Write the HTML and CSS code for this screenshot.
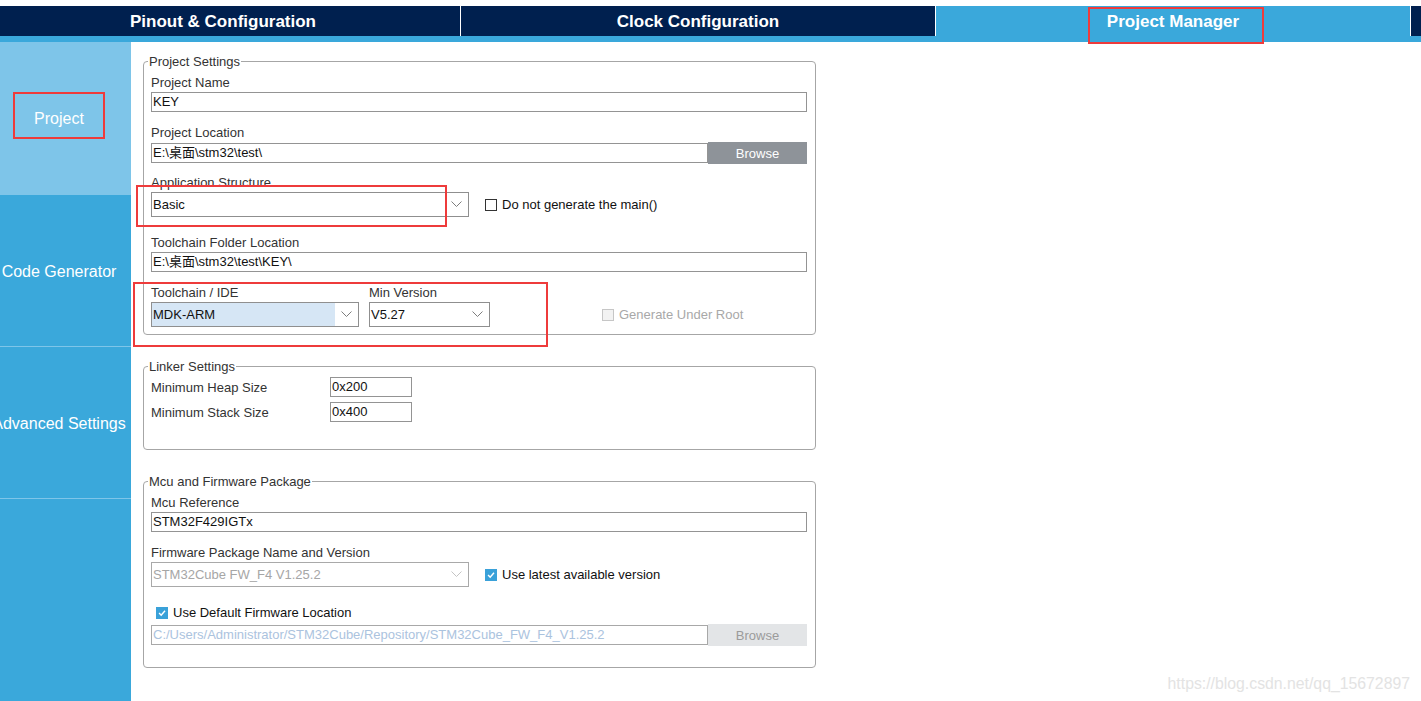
FILE: index.html
```html
<!DOCTYPE html>
<html>
  <head>
    <title>STM32CubeMX - Project Manager</title>
    <meta charset="utf-8"/>
    <meta name="viewport" content="width=device-width, initial-scale=1.0"/>
    <link rel="stylesheet" href="styles.css">
  </head>
  <body>
    <div class="tabs">
      <div class="tab">Pinout &amp; Configuration</div>
      <div class="tab">Clock Configuration</div>
      <div class="tab active">Project Manager</div>
      <div class="tab filler"></div>
    </div>
    <div class="main">
      <div class="side">
        <div class="side-item active">Project</div>
        <div class="side-item">Code Generator</div>
        <div class="side-item">Advanced Settings</div>
      </div>
      <div class="content">
        <fieldset class="group project-group">
          <legend>Project Settings</legend>
          <div class="field">
            <div class="label">Project Name</div>
            <div class="input">KEY</div>
          </div>
          <div class="field">
            <div class="label">Project Location</div>
            <div class="browse-row">
              <div class="input path">E:\桌面\stm32\test\</div>
              <div class="browse">Browse</div>
            </div>
          </div>
          <div class="field tall">
            <div class="label">Application Structure</div>
            <div class="inline">
              <div class="select wide">
                <span class="value">Basic</span>
                <span class="arrow"><svg width="11" height="7" viewBox="0 0 11 7"><polyline points="0.5,0.5 5.5,5.5 10.5,0.5" fill="none" stroke="#7d7d7d" stroke-width="1"/></svg></span>
              </div>
              <span class="check"></span>
              <span class="check-label">Do not generate the main()</span>
            </div>
          </div>
          <div class="field">
            <div class="label">Toolchain Folder Location</div>
            <div class="input">E:\桌面\stm32\test\KEY\</div>
          </div>
          <div class="toolchain-row">
            <div class="col ide">
              <div class="label">Toolchain / IDE</div>
              <div class="select">
                <span class="value picked">MDK-ARM</span>
                <span class="arrow"><svg width="11" height="7" viewBox="0 0 11 7"><polyline points="0.5,0.5 5.5,5.5 10.5,0.5" fill="none" stroke="#7d7d7d" stroke-width="1"/></svg></span>
              </div>
            </div>
            <div class="col version">
              <div class="label">Min Version</div>
              <div class="select">
                <span class="value">V5.27</span>
                <span class="arrow"><svg width="11" height="7" viewBox="0 0 11 7"><polyline points="0.5,0.5 5.5,5.5 10.5,0.5" fill="none" stroke="#7d7d7d" stroke-width="1"/></svg></span>
              </div>
            </div>
            <div class="root-check">
              <span class="check disabled"></span>
              <span class="check-label disabled">Generate Under Root</span>
            </div>
          </div>
        </fieldset>

        <fieldset class="group linker-group">
          <legend>Linker Settings</legend>
          <div class="linker-row">
            <span class="linker-label">Minimum Heap Size</span>
            <div class="input small">0x200</div>
          </div>
          <div class="linker-row">
            <span class="linker-label">Minimum Stack Size</span>
            <div class="input small">0x400</div>
          </div>
        </fieldset>

        <fieldset class="group mcu-group">
          <legend>Mcu and Firmware Package</legend>
          <div class="field">
            <div class="label">Mcu Reference</div>
            <div class="input">STM32F429IGTx</div>
          </div>
          <div class="field tall">
            <div class="label">Firmware Package Name and Version</div>
            <div class="inline">
              <div class="select wide disabled">
                <span class="value">STM32Cube FW_F4 V1.25.2</span>
                <span class="arrow"><svg width="11" height="7" viewBox="0 0 11 7"><polyline points="0.5,0.5 5.5,5.5 10.5,0.5" fill="none" stroke="#c4c4c4" stroke-width="1"/></svg></span>
              </div>
              <span class="check checked"><svg width="12" height="12" viewBox="0 0 12 12"><polyline points="2.5,6 5,8.6 9.6,3.2" fill="none" stroke="#fff" stroke-width="1.7"/></svg></span>
              <span class="check-label">Use latest available version</span>
            </div>
          </div>
          <div class="default-row">
            <span class="check checked"><svg width="12" height="12" viewBox="0 0 12 12"><polyline points="2.5,6 5,8.6 9.6,3.2" fill="none" stroke="#fff" stroke-width="1.7"/></svg></span>
            <span class="check-label">Use Default Firmware Location</span>
          </div>
          <div class="browse-row">
            <div class="input path disabled">C:/Users/Administrator/STM32Cube/Repository/STM32Cube_FW_F4_V1.25.2</div>
            <div class="browse disabled">Browse</div>
          </div>
        </fieldset>
      </div>
    </div>

    <div class="mark mark-project"></div>
    <div class="mark mark-tab"></div>
    <div class="mark mark-structure"></div>
    <div class="mark mark-toolchain"></div>

    <div class="watermark">https://blog.csdn.net/qq_15672897</div>
  </body>
</html>
```

FILE: styles.css
```css
body {
  background: #fff;
  font-family: "Liberation Sans", Arial, "Noto Sans CJK SC", sans-serif;
  height: 701px;
  margin: 0;
  overflow: hidden;
  position: relative;
}
div, span, fieldset {
  box-sizing: border-box;
}

/* top tabs */
.tabs {
  background: #00204f;
  border-bottom: 6px solid #3aa8db;
  display: flex;
  height: 36px;
  margin-top: 6px;
}
.tab {
  align-items: center;
  color: #fff;
  display: flex;
  font-size: 17px;
  font-weight: bold;
  justify-content: center;
  padding-top: 2px;
  width: 475px;
}
.tab:first-child {
  padding-right: 14px;
  width: 460px;
}
.tab + .tab {
  border-left: 1px solid #fff;
}
.tab.active {
  background: #3aa8db;
}
.tab.filler {
  flex: 1;
}

.main {
  display: flex;
  height: 659px;
}

/* left menu */
.side {
  background: #3aa8db;
  flex-shrink: 0;
  overflow: hidden;
  width: 131px;
}
.side-item {
  align-items: center;
  border-bottom: 1px solid #7ec5e9;
  color: #fff;
  display: flex;
  font-size: 16px;
  height: 152px;
  justify-content: center;
  padding: 2px 13px 0 0;
  white-space: nowrap;
}
.side-item.active {
  background: #7ec5e9;
  height: 153px;
}

/* groups */
.content {
  flex: 1;
  padding: 12px 0 0 12px;
}
.group {
  border: 1px solid #a6a6a6;
  border-radius: 4px;
  margin: 0 0 24px 0;
  min-width: 0;
  padding: 6px 8px 7px 7px;
  width: 673px;
}
.group legend {
  color: #333;
  font-size: 13px;
  line-height: 15px;
  margin-left: -3px;
  padding: 0 1px;
}
.linker-group {
  padding-top: 3px;
  padding-bottom: 27px;
}
.mcu-group {
  padding-bottom: 21px;
}

.field {
  height: 50px;
}
.field.tall {
  height: 60px;
}
.label {
  color: #333;
  font-size: 13px;
  line-height: 15px;
  margin-bottom: 2px;
  white-space: nowrap;
}

.input {
  border: 1px solid #949494;
  color: #111;
  font-size: 13px;
  height: 20px;
  line-height: 18px;
  overflow: hidden;
  padding-left: 1px;
  white-space: nowrap;
}
.input.path {
  width: 557px;
}
.input.small {
  width: 82px;
}
.input.disabled {
  border-color: #a8a8a8;
  color: #abc3de;
}

.browse-row {
  align-items: center;
  display: flex;
  height: 22px;
}
.browse {
  align-items: center;
  background: #8e9399;
  color: #fff;
  display: flex;
  flex: 1;
  font-size: 13px;
  height: 22px;
  justify-content: center;
}
.browse.disabled {
  background: #e3e5e7;
  color: #9b9b9b;
}

/* combo boxes */
.select {
  border: 1px solid #8f8f8f;
  display: flex;
  font-size: 13px;
  height: 25px;
}
.select.wide {
  width: 318px;
}
.select .value {
  color: #111;
  flex: 1;
  line-height: 23px;
  overflow: hidden;
  padding-left: 1px;
  white-space: nowrap;
}
.select .value.picked {
  background: #d6e6f5;
}
.select .arrow {
  align-items: center;
  display: flex;
  justify-content: center;
  width: 23px;
}
.select.disabled {
  border-color: #a9a9a9;
}
.select.disabled .value {
  color: #a6a6a6;
}

.inline {
  align-items: center;
  display: flex;
}
.inline .select {
  margin-right: 16px;
}

/* check boxes */
.check {
  align-items: center;
  background: #fff;
  border: 1px solid #333;
  display: flex;
  flex-shrink: 0;
  height: 12px;
  justify-content: center;
  width: 12px;
}
.check.checked {
  background: #3aa1d9;
  border-color: #3aa1d9;
}
.check.disabled {
  background: #f2f2f2;
  border-color: #c6c6c6;
}
.check-label {
  color: #111;
  font-size: 13px;
  margin-left: 5px;
  white-space: nowrap;
}
.check-label.disabled {
  color: #a8a8a8;
}

.toolchain-row {
  display: flex;
}
.col.ide {
  width: 208px;
}
.col.version {
  margin-left: 10px;
  width: 121px;
}
.root-check {
  align-items: center;
  align-self: flex-end;
  display: flex;
  height: 25px;
  margin-left: 112px;
}

.linker-row {
  align-items: center;
  display: flex;
  height: 20px;
}
.linker-row + .linker-row {
  margin-top: 5px;
}
.linker-label {
  color: #333;
  font-size: 13px;
  width: 179px;
}

.default-row {
  align-items: center;
  display: flex;
  height: 15px;
  margin: 0 0 4px 5px;
}

/* red annotation frames */
.mark {
  border: 2px solid #ee3b3b;
  position: absolute;
}
.mark-project {
  height: 47px;
  left: 13px;
  top: 92px;
  width: 92px;
}
.mark-tab {
  height: 37px;
  left: 1088px;
  top: 7px;
  width: 176px;
}
.mark-structure {
  height: 42px;
  left: 136px;
  top: 185px;
  width: 311px;
}
.mark-toolchain {
  height: 65px;
  left: 133px;
  top: 282px;
  width: 415px;
}

.watermark {
  bottom: 8px;
  color: #e3e3e3;
  font-size: 15.8px;
  position: absolute;
  right: 11px;
}
```
